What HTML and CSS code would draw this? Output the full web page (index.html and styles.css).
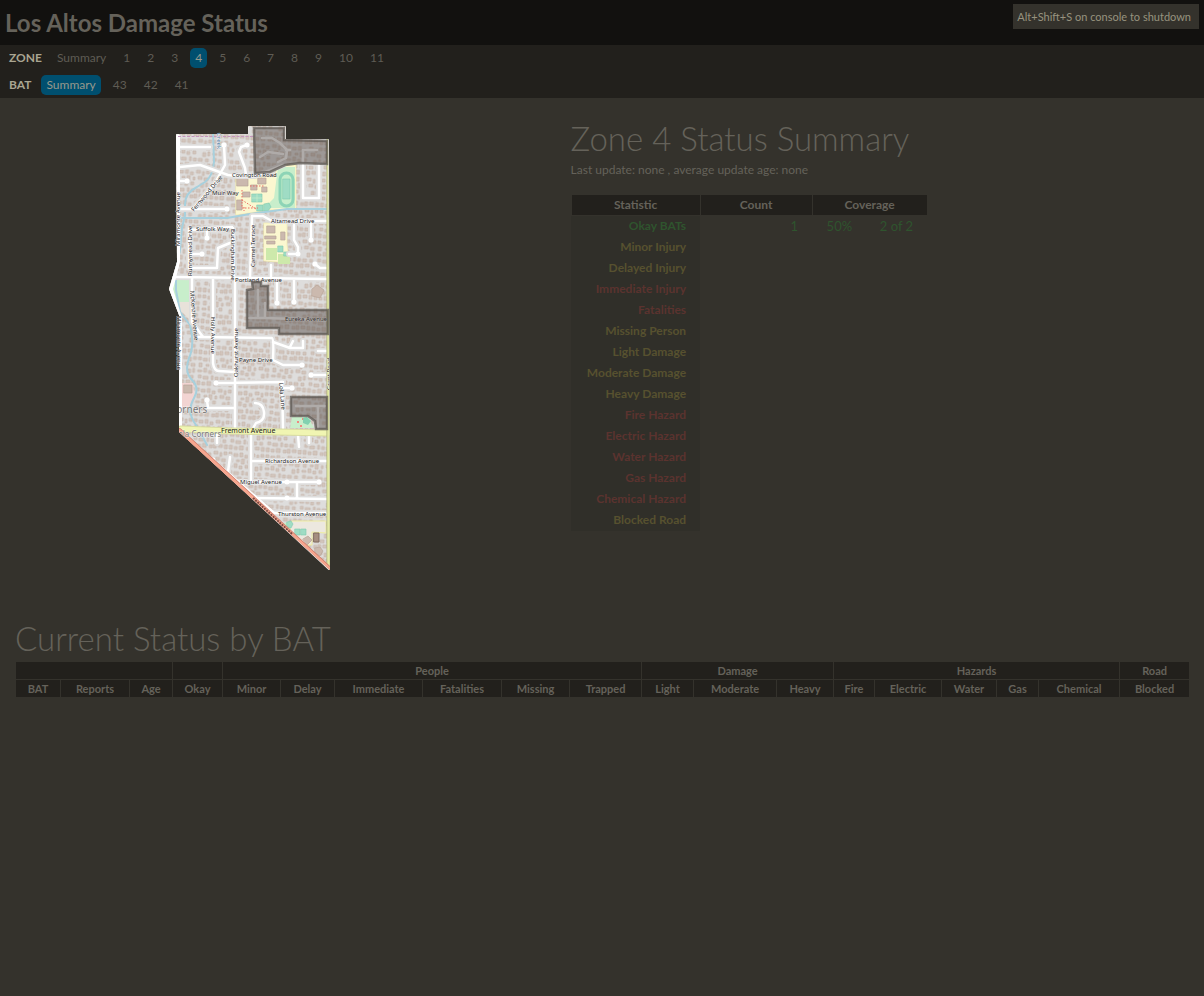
FILE: index.html
```html
<!DOCTYPE html>
<html lang="en">
<head>
<meta charset="utf-8">
<title>Los Altos Damage Status</title>
<link rel="stylesheet" href="styles.css">
</head>
<body>
<header class="banner">
  <h1 class="banner-title">Los Altos Damage Status</h1>
  <p class="notice">Alt+Shift+S on console to shutdown</p>
</header>
<nav class="nav">
  <div class="nav-row"><span class="nav-label">ZONE</span>
    <a href="#">Summary</a><a href="#">1</a><a href="#">2</a><a href="#">3</a><a href="#" class="active">4</a><a href="#">5</a><a href="#">6</a><a href="#">7</a><a href="#">8</a><a href="#">9</a><a href="#">10</a><a href="#">11</a>
  </div>
  <div class="nav-row"><span class="nav-label">BAT</span>
    <a href="#" class="active">Summary</a><a href="#">43</a><a href="#">42</a><a href="#">41</a>
  </div>
</nav>
<main class="content">
  <div class="overview">
    <svg class="map" viewBox="160 118 180 460" role="img" aria-label="Map of zone 4">
      <defs>
        <clipPath id="zone"><path d="M176 134H248L249 126H285V139H328L330 570L179 432V315L169 289L177 262Z"/></clipPath>
        <pattern id="houses" width="37" height="31" patternUnits="userSpaceOnUse" patternTransform="rotate(4)">
          <g fill="#d3c6bd" stroke="#c2b2a7" stroke-width=".6">
            <path d="M1 1h3v3h-3zM6 2h4v3h-4zM12 1h3v4h-3zM17 3h3v3h-3zM23 1h4v3h-4zM29 2h2v4h-2zM33 1h3v3h-3z"/>
            <path d="M2 7h3v4h-3zM9 8h3v2h-3zM14 7h3v5h-3zM20 8h2v3h-2zM25 7h4v3h-4zM31 8h4v3h-4z"/>
            <path d="M1 14h4v2h-4zM7 12h3v4h-3zM12 14h3v3h-3zM18 13h3v3h-3zM28 14h3v4h-3zM33 13h2v4h-2z"/>
            <path d="M2 19h3v3h-3zM7 20h5v3h-5zM15 19h2v4h-2zM19 20h3v3h-3zM24 20h4v3h-4zM31 20h3v3h-3z"/>
            <path d="M1 25h3v4h-3zM6 26h3v3h-3zM11 25h4v4h-4zM18 26h3v3h-3zM22 25h3v4h-3zM27 25h4v3h-4zM33 25h3v4h-3z"/>
          </g>
        </pattern>
        <path id="roads" d="M180 147H210M180 167L200 165L228 175L237 176H255L283 165M224 145L225 165L215 183L193 209M247 145L241 147L239 152L245 168L246 175M180 181H187M180 209H227M303 165V198H319V165M252 216H263L272 221H328M252 216L250 278M190 230L232 227M189 228V268H217L218 248L230 243M189 254H202M207 230V238M233 228L234 278M175 277L327 279M192 278V322L203 337M197 337L272 338Q274 339 273 360L283 365H302M273 342L290 348H303V341M290 347L293 341M213 278V363Q214 371 219 371L235 372M235 278V430M277 282V303M294 280V302M271 265V278M294 225V240L298 247V254H289M311 222V240M315 264L320 268H328M318 351H327M311 375H327M216 383L283 382M283 388H292M282 382L283 428M207 400L208 408H235M255 403Q263 403 264 412Q265 421 256 423L252 430M251 435V480M217 435V443M298 435L299 447M309 435V443M253 461H327M235 482H319M230 457L228 472M297 482V498M253 498L327 499M273 513H327"/>
      </defs>
      <path d="M178 135H249V127H285V140H328L329 569L180 431V315L170 289L178 262Z" fill="none" stroke="#f2efea" stroke-width="2" stroke-linejoin="round"/>
      <g clip-path="url(#zone)" fill="none" stroke-linecap="round" stroke-linejoin="round">
        <path fill="#dedddc" d="M160 118h180v460h-180z"/>
        <path fill="url(#houses)" d="M160 118h180v460h-180z"/>
        <path fill="#fbf7d0" stroke="#efeaa8" stroke-width=".6" d="M236 177H275L277 165H296V209L270 210L236 215ZM264 223H287V245L290 263L264 261Z"/>
        <path fill="#c8eecb" d="M278 167H295V208H264L274 198ZM175 279H190V302H175L172 290ZM292 417H308L314 428H290ZM281 524L292 521V532Z"/>
        <path fill="#cde9ab" d="M266 248H277V260H266ZM278 254H290V264H278Z"/>
        <path fill="#f2d4d2" d="M180 383H193L195 400L188 408H180Z"/>
        <path fill="#e8e2da" d="M176 302H190V320L178 308Z"/>
        <path fill="#ece8df" stroke="#eeeca0" stroke-width="1" d="M292 521H326V533L312 532V545H300L290 531Z"/>
        <rect x="280" y="173" width="13" height="33" rx="6.500" fill="#c8eecb" stroke="#8dd4b6" stroke-width="3"/>
        <path fill="#9fdcc4" stroke="#7ecbae" stroke-width=".6" d="M283 179h7v20h-7zM252 194h10v8h-10zM257 205h6v6h-6zM264 204l5-1 2 4-3 4h-4zM278 246h5v6h-5zM284 252h5v4h-5zM287 522l4-1 2 3-2 4-4-1zM295 529h5v6h-5zM301 529h5v6h-5z"/>
        <path stroke="#c8eecb" stroke-width=".7" d="M252 198h10M257 194v8"/>
        <path fill="#cbb9ae" stroke="#b8a598" stroke-width=".7" d="M237 178h11v8h-11zM258 178h8v6h-8zM251 185h6v5h-6zM262 187h5v5h-5zM243 192h7v5h-7zM237 200h5v10h-5zM267 226h8v7h-8zM265 236h11v3h-11zM267 241h8v3h-8zM281 232h4v8h-4zM312 289l5-4 7 5-4 8-8-2zM184 385h8v8h-8zM303 539l5-3 4 4-5 5zM315 548l5-1 3 4-3 5-5-3z"/>
        <path fill="#a58e80" stroke="#806a5e" d="M314 533h5v9h-5z"/>
        <path fill="#ee8981" d="M297 421h2v2h-2zM302 418h2v2h-2zM300 425h2v2h-2z"/>
        <path fill="#82d1b0" d="M303 418l4-1 4 4-3 4-5-2z"/>
        <path stroke="#eb6f65" stroke-width="1" stroke-dasharray="1.500 1.500" stroke-linecap="butt" d="M242 190v18h16M244 207v4M250 186h14M242 200l14 9"/>
        <path stroke="#a7d0dd" stroke-width="2" d="M213 133L214 162Q213 176 205 182L197 187Q185 193 185 204V215L182 228L180 250L176 268V290L180 312L190 325Q195 345 189 358Q184 372 192 380Q200 388 194 398Q186 412 196 425L207 445M182 218H227L250 214L287 209H328"/>
        <use href="#roads" stroke="#dedddc" stroke-width="6"/>
        <use href="#roads" stroke="#fff" stroke-width="2.500"/>
        <path stroke="#fff" stroke-width="2.500" d="M262 138H272L280 143L287 150L286 158L278 162M286 150H290M260 157L268 152L283 154M303 162V150H317M249 318H265V303M258 290V316M265 318L325 320M296 406H325M318 406V428"/>
        <path stroke="#fff" stroke-width="4" d="M178 136V262L171 289L180 318V430M212 460L273 513"/>
        <path stroke="#fff" stroke-width="5" d="M224 145h0M247 145h0M187 181h0M227 209h0M202 254h0M277 303h0M294 302h0M298 254h0M311 240h0M315 264h0M302 365h0M311 375h0M216 383h0M292 388h0M207 400h0M319 482h0M213 460h0M287 482h0M287 498h0M207 238h0"/>
        <path stroke="#c595bd" stroke-width="1" stroke-dasharray="3 1.500" stroke-linecap="butt" d="M178 136.500H254"/>
        <path stroke="#d8dca0" stroke-width="7" d="M181 429L230 431L328 433"/>
        <path stroke="#f0f5b2" stroke-width="5" d="M181 429L230 431L328 433"/>
        <path stroke="#a9af78" stroke-width="4" d="M328.500 140V568"/>
        <path stroke="#e4eaa5" stroke-width="2.500" d="M328.500 140V568"/>
        <path stroke="#cf7c6b" stroke-width="6" d="M179 431L330 570"/>
        <path stroke="#f6a68f" stroke-width="4.500" d="M179 431L330 570"/>
        <path stroke="#7c4b42" stroke-width="2" stroke-dasharray="2 1" stroke-linecap="butt" d="M253 498L292 534"/>
      </g>
      <g class="map-labels">
        <text x="232" y="177">Covington Road</text><text x="212" y="195">Muir Way</text>
        <text x="271" y="223">Altamead Drive</text><text x="196" y="231">Suffolk Way</text>
        <text x="235" y="282">Portland Avenue</text><text x="285" y="321">Eureka Avenue</text>
        <text x="239" y="362">Payne Drive</text><text x="265" y="463">Richardson Avenue</text>
        <text x="240" y="484">Miguel Avenue</text><text x="278" y="516">Thurston Avenue</text>
        <text class="major" x="221" y="433">Fremont Avenue</text>
        <text transform="translate(194 212) rotate(-50)">Fernwood Drive</text>
        <text transform="translate(180 246) rotate(-90)">Miramonte Avenue</text>
        <text transform="translate(192 276) rotate(-90)">Runnymead Drive</text>
        <text transform="translate(231 229) rotate(90)">Buckingham Drive</text>
        <text transform="translate(255 267) rotate(-90)">Carmel Terrace</text>
        <text transform="translate(190 291) rotate(85)">McKenzie Avenue</text>
        <text transform="translate(211 317) rotate(90)">Holly Avenue</text>
        <text transform="translate(238 377) rotate(-90)">Oakhurst Avenue</text>
        <text transform="translate(177 316) rotate(90)">Miramonte Avenue</text>
        <text transform="translate(279 383) rotate(85)">Lola Lane</text>
        <text class="creek" transform="translate(217 133) rotate(90)">Creek</text>
        <g clip-path="url(#zone)"><text transform="translate(331 390) rotate(-90)">Grant Road</text><text class="place" x="170" y="413">Corners</text><text class="place small" x="165" y="437">Loyola Corners</text></g>
      </g>
      <g fill="#504943" fill-opacity=".46" stroke="#5d5853" stroke-opacity=".75" stroke-width="2.500">
        <path d="M254 128H284V140L327 141V164L300 163L285 165L270 172L255 173Z"/>
        <path d="M252 282H261V286H268V310H328V334H279V328H247V290L253 289Z"/>
        <path d="M291 397H327V429H316L315 421L308 416H291Z"/>
      </g>
    </svg>
    <section class="summary">
      <h2>Zone 4 Status Summary</h2>
      <p class="updated">Last update: none , average update age: none</p>
      <table class="stats">
        <colgroup><col class="c-stat"><col class="c-count"><col class="c-pct"><col class="c-of"></colgroup>
        <thead><tr><th>Statistic</th><th>Count</th><th colspan="2">Coverage</th></tr></thead>
        <tbody>
          <tr class="ok"><th>Okay BATs</th><td>1</td><td>50%</td><td>2 of 2</td></tr>
          <tr class="warn"><th>Minor Injury</th></tr>
          <tr class="warn"><th>Delayed Injury</th></tr>
          <tr class="bad"><th>Immediate Injury</th></tr>
          <tr class="bad"><th>Fatalities</th></tr>
          <tr class="warn"><th>Missing Person</th></tr>
          <tr class="warn"><th>Light Damage</th></tr>
          <tr class="warn"><th>Moderate Damage</th></tr>
          <tr class="warn"><th>Heavy Damage</th></tr>
          <tr class="bad"><th>Fire Hazard</th></tr>
          <tr class="bad"><th>Electric Hazard</th></tr>
          <tr class="bad"><th>Water Hazard</th></tr>
          <tr class="bad"><th>Gas Hazard</th></tr>
          <tr class="bad"><th>Chemical Hazard</th></tr>
          <tr class="warn"><th>Blocked Road</th></tr>
        </tbody>
      </table>
    </section>
  </div>
  <section class="current">
    <h2>Current Status by BAT</h2>
    <table class="bats">
      <colgroup><col class="w45"><col class="w69"><col class="w43"><col class="w50"><col class="w58"><col class="w54"><col class="w88"><col class="w79"><col class="w68"><col class="w72"><col class="w52"><col class="w83"><col class="w57"><col class="w41"><col class="w67"><col class="w55"><col class="w42"><col class="w81"><col class="w70"></colgroup>
      <thead>
        <tr><th colspan="3"></th><th></th><th colspan="6">People</th><th colspan="3">Damage</th><th colspan="5">Hazards</th><th>Road</th></tr>
        <tr><th>BAT</th><th>Reports</th><th>Age</th><th>Okay</th><th>Minor</th><th>Delay</th><th>Immediate</th><th>Fatalities</th><th>Missing</th><th>Trapped</th><th>Light</th><th>Moderate</th><th>Heavy</th><th>Fire</th><th>Electric</th><th>Water</th><th>Gas</th><th>Chemical</th><th>Blocked</th></tr>
      </thead>
    </table>
  </section>
</main>
</body>
</html>
```
FILE: styles.css
```css
* { box-sizing: border-box; }
body {
  margin: 0;
  background: #34322c;
  color: #65625a;
  font-family: Lato, "Open Sans", sans-serif;
  font-size: 12px;
}
h1, h2, p { margin: 0; }
.banner {
  display: flex;
  justify-content: space-between;
  align-items: flex-start;
  padding: 4px 5px;
  background: #12110f;
}
.banner-title { font-size: 24px; line-height: 37px; font-weight: 700; }
.notice {
  padding: 0 8px 0 4px;
  background: #34322c;
  color: #97927f;
  font-size: 11px;
  line-height: 25px;
}
.nav {
  display: grid;
  gap: 7px;
  padding: 3px 9px 3px;
  background: #22201c;
}
.nav-row { display: flex; gap: 7px; align-items: center; }
.nav-label { margin-right: 3px; color: #aaa591; font-weight: 700; line-height: 20px; }
.nav a {
  padding: 0 5px;
  border-radius: 5px;
  color: #5f5c54;
  text-decoration: none;
  line-height: 20px;
}
.nav a.active { background: #004f6f; color: #97998c; }
.content { padding: 20px 15px; }
.overview { display: grid; grid-template-columns: 40% 1fr; gap: 86px; }
.map { width: 180px; justify-self: center; }
.map-labels { font: 6px "Noto Sans", sans-serif; fill: #222; stroke: #fff; stroke-width: 1px; stroke-opacity: .6; paint-order: stroke; }
.map-labels .major { font-size: 7px; stroke: #f0f5b2; }
.map-labels .place { font-size: 10px; fill: #777; }
.map-labels .small { font-size: 8px; }
.map-labels .creek { fill: #4c83a8; }
h2 { font-size: 33px; font-weight: 300; line-height: 40px; }
.updated { margin-top: 2px; line-height: 20px; }
.stats, .bats { border-collapse: collapse; }
.stats { margin-top: 14px; table-layout: fixed; width: 356px; }
.c-stat { width: 129px; }
.c-count { width: 112px; }
.c-pct { width: 54px; }
.c-of { width: 61px; }
.stats th, .stats td { height: 21px; padding: 0 14px; line-height: 20px; white-space: nowrap; }
.stats thead th { background: #22201c; border: 1px solid #34322c; }
.stats tbody th { background: #302f29; text-align: right; padding-left: 0; }
.stats td { padding-left: 0; text-align: right; font-size: 13px; }
.ok { color: #2f542e; }
.warn { color: #57512f; }
.bad { color: #5b332f; }
.current { margin-top: 40px; }
.bats { width: 100%; margin-top: 3px; table-layout: fixed; font-size: 11px; }
.bats th { height: 18px; padding: 0; line-height: 17px; background: #22201c; border: 1px solid #34322c; }
.w41 { width: 41px; } .w42 { width: 42px; } .w43 { width: 43px; } .w45 { width: 45px; }
.w50 { width: 50px; } .w52 { width: 52px; } .w54 { width: 54px; } .w55 { width: 55px; }
.w57 { width: 57px; } .w58 { width: 58px; } .w67 { width: 67px; } .w68 { width: 68px; }
.w69 { width: 69px; } .w70 { width: 70px; } .w72 { width: 72px; } .w79 { width: 79px; }
.w81 { width: 81px; } .w83 { width: 83px; } .w88 { width: 88px; }
```
